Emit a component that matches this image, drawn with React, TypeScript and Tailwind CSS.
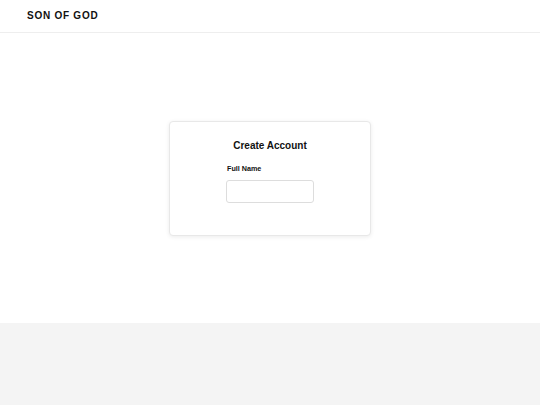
import React from "react";

export default function App() {
  return (
    <div className="w-[540px] h-[405px] flex flex-col bg-white overflow-hidden" style={{ fontFamily: '"Liberation Sans", Arial, sans-serif' }}>
      <header className="h-[33px] shrink-0 border-b border-[#eeeeee] flex items-center px-[27px]">
        <span className="text-[10px] font-bold tracking-[0.75px] text-[#111111] leading-none">SON OF GOD</span>
      </header>
      <main className="h-[290px] shrink-0 flex items-center justify-center">
        <div className="w-[202px] h-[115px] bg-white border border-[#e8e8e8] rounded-[4px] shadow-[0_1px_4px_rgba(0,0,0,0.08)] flex flex-col items-center pt-[16px]">
          <h1 className="text-[10px] font-bold leading-[15px] text-[#111111]">Create Account</h1>
          <div className="w-[88px] mt-[11px] flex flex-col">
            <label className="text-[7.2px] font-bold leading-[10px] text-[#111111] pl-[1px]">Full Name</label>
            <input className="mt-[6px] h-[23px] w-[88px] border border-[#dddddd] rounded-[3px] bg-white outline-none" />
          </div>
        </div>
      </main>
      <footer className="flex-1 bg-[#f4f4f4]" />
    </div>
  );
}
